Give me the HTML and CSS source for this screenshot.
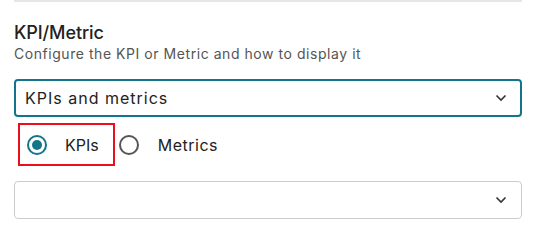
FILE: index.html
```html
<!DOCTYPE html>
<html lang="en">
<head>
  <meta charset="UTF-8" />
  <meta name="viewport" content="width=device-width, initial-scale=1.0"/>
  <title>KPI/Metric</title>
  <link rel="stylesheet" href="styles.css">
</head>
<body>
  <div class="panel">
    <!-- KPI / Metric section -->
    <div class="section">
      <h3 class="section-title">KPI/Metric</h3>
      <p class="section-desc">Configure the KPI or Metric and how to display it</p>

      <div class="select select-active">
        <span class="select-value">KPIs and metrics</span>
        <svg class="chevron" width="12" height="8" viewBox="0 0 12 8"><path d="M1.5 1.5 L6 6 L10.5 1.5" fill="none" stroke="#333" stroke-width="1.6"/></svg>
      </div>

      <div class="radio-row">
        <label class="radio-option radio-marked">
          <input type="radio" name="kind" checked />
          <span>KPIs</span>
        </label>
        <label class="radio-option">
          <input type="radio" name="kind" />
          <span>Metrics</span>
        </label>
      </div>

      <div class="select">
        <span class="select-value"></span>
        <svg class="chevron" width="12" height="8" viewBox="0 0 12 8"><path d="M1.5 1.5 L6 6 L10.5 1.5" fill="none" stroke="#333" stroke-width="1.6"/></svg>
      </div>
    </div>
  </div>
</body>
</html>
```

FILE: styles.css
```css
/* Base */
body {
  margin: 0;
  font-family: Inter, "Open Sans", sans-serif;
  background: #fff;
  color: #222;
}

.panel {
  margin: 0 20px 0 14px;
}

/* Section */
.section {
  border-top: 2px solid #e6e6e6;
  padding-top: 20px;
}
.section-title {
  margin: 0;
  font-size: 18px;
  font-weight: 500;
  line-height: 22px;
  color: #222;
  letter-spacing: -0.1px;
}
.section-desc {
  margin: 0 0 15px;
  font-size: 14px;
  line-height: 20px;
  color: #555;
  letter-spacing: 0.55px;
}

/* Fake select */
.select {
  display: flex;
  align-items: center;
  justify-content: space-between;
  height: 38px;
  box-sizing: border-box;
  padding: 0 14px 0 10px;
  border: 1px solid #ccc;
  border-radius: 4px;
  font-size: 16px;
  color: #222;
  letter-spacing: 1px;
}
.select-active {
  border: 2px solid #13758a;
  padding-left: 9px;
  padding-right: 13px;
}

/* Radios */
.radio-row {
  display: flex;
  align-items: center;
  margin: 6px 0 15px 4px;
}
.radio-option {
  display: flex;
  align-items: center;
  gap: 18px;
  height: 39px;
  padding: 0 14px 0 7px;
  font-size: 16px;
  border: 2px solid transparent;
}
.radio-option + .radio-option {
  padding-left: 2px;
  gap: 19px;
  letter-spacing: 0.5px;
}
.radio-marked {
  border-color: #e8101a;
}
.radio-option input {
  appearance: none;
  margin: 0;
  width: 20px;
  height: 20px;
  border: 2px solid #555;
  border-radius: 50%;
  display: grid;
  place-items: center;
}
.radio-option input:checked {
  border-color: #13758a;
}
.radio-option input:checked::after {
  content: "";
  width: 10px;
  height: 10px;
  border-radius: 50%;
  background: #13758a;
}
```
